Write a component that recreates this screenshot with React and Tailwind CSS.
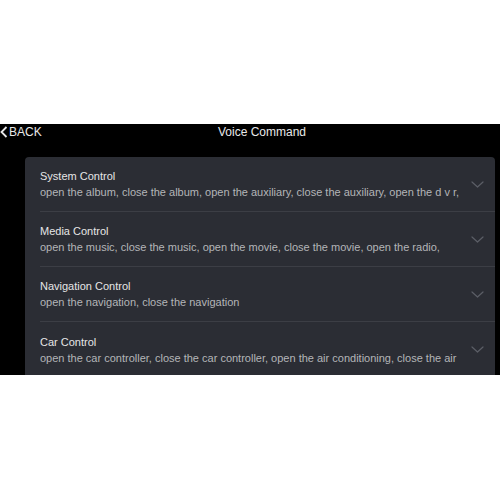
import React from 'react';

const groups = [
  {
    title: 'System Control',
    desc: 'open the album, close the album, open the auxiliary, close the auxiliary, open the d v r,',
  },
  {
    title: 'Media Control',
    desc: 'open the music, close the music, open the movie, close the movie, open the radio,',
  },
  {
    title: 'Navigation Control',
    desc: 'open the navigation, close the navigation',
  },
  {
    title: 'Car Control',
    desc: 'open the car controller, close the car controller, open the air conditioning, close the air',
  },
];

function Chevron() {
  return (
    <svg width="13" height="7" viewBox="0 0 13 7" fill="none" className="shrink-0">
      <path d="M1 1l5.5 5L12 1" stroke="#5b5e66" strokeWidth="1.2" strokeLinecap="round" strokeLinejoin="round" />
    </svg>
  );
}

export default function App() {
  return (
    <div className="w-[500px] h-[500px] bg-white font-['Liberation_Sans',Arial,sans-serif]">
      <div className="h-[124px]" />
      <div className="h-[251px] bg-black overflow-hidden">
        <div className="flex items-center h-[16px] text-[12px] text-[#e8e8e8]">
          <div className="w-[40px] flex items-center">
            <svg width="9" height="12" viewBox="0 0 9 12" fill="none" className="shrink-0">
              <path d="M6.5 1L1.5 6l5 5" stroke="#e8e8e8" strokeWidth="1.8" />
            </svg>
            <span>BACK</span>
          </div>
          <div className="flex-1 text-center pr-[16px]">Voice Command</div>
        </div>
        <div className="ml-[25px] mr-[5px] mt-[17px] rounded-t-[4px] bg-[#2b2d34] pl-[15px]">
          {groups.map((g, i) => (
            <div
              key={g.title}
              className={`h-[55px] flex items-center pr-[11px] ${i < groups.length - 1 ? 'border-b border-[#3c3e45]' : ''}`}
            >
              <div className="flex-1 min-w-0 leading-[16px] text-[11px]">
                <div className="text-[#e6e6e6]">{g.title}</div>
                <div className="text-[#b4b5b8] whitespace-nowrap overflow-hidden">{g.desc}</div>
              </div>
              <Chevron />
            </div>
          ))}
        </div>
      </div>
    </div>
  );
}
